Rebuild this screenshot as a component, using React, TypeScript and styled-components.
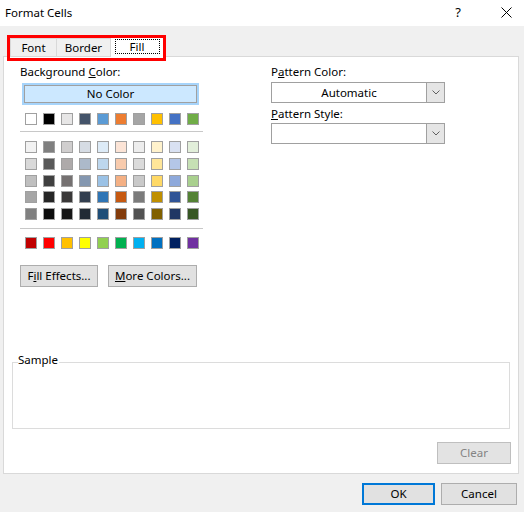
import React from 'react'
import styled, { createGlobalStyle } from 'styled-components'

const themeColors = ['#ffffff', '#000000', '#e7e6e6', '#44546a', '#5b9bd5', '#ed7d31', '#a5a5a5', '#ffc000', '#4472c4', '#70ad47']

const tintRows = [
  ['#f2f2f2', '#7f7f7f', '#d0cece', '#d6dce4', '#ddebf7', '#fce4d6', '#ededed', '#fff2cc', '#d9e1f2', '#e2efda'],
  ['#d9d9d9', '#595959', '#aeaaaa', '#acb9ca', '#bdd7ee', '#f8cbad', '#dbdbdb', '#ffe699', '#b4c6e7', '#c6e0b4'],
  ['#bfbfbf', '#404040', '#757171', '#8497b0', '#9bc2e6', '#f4b084', '#c9c9c9', '#ffd966', '#8ea9db', '#a9d08e'],
  ['#a6a6a6', '#262626', '#3a3838', '#333f4f', '#2f75b5', '#c65911', '#7b7b7b', '#bf8f00', '#305496', '#548235'],
  ['#808080', '#0d0d0d', '#161616', '#222b35', '#1f4e78', '#833c0c', '#525252', '#806000', '#203764', '#375623'],
]

const standardColors = ['#c00000', '#ff0000', '#ffc000', '#ffff00', '#92d050', '#00b050', '#00b0f0', '#0070c0', '#002060', '#7030a0']

const GlobalStyle = createGlobalStyle`
  html, body {
    margin: 0;
    padding: 0;
    background: #f0f0f0;
  }
  body {
    font-family: "Noto Sans", "Open Sans", sans-serif;
    font-size: 11.5px;
    color: #000;
  }
  * {
    box-sizing: border-box;
  }
`

const Chevron = () => (
  <svg width="8" height="5" viewBox="0 0 8 5">
    <path d="M0.5 0.5 L4 4 L7.5 0.5" fill="none" stroke="#606060" strokeWidth="1" />
  </svg>
)

const CloseGlyph = () => (
  <svg width="11" height="11" viewBox="0 0 11 11">
    <path d="M0.5 0.5 L10.5 10.5 M10.5 0.5 L0.5 10.5" stroke="#000" strokeWidth="1" />
  </svg>
)

const App = () => {
  return (
    <Dialog>
      <GlobalStyle />
      <TitleBar>
        <Title>Format Cells</Title>
        <HelpButton>?</HelpButton>
        <CloseButton><CloseGlyph /></CloseButton>
      </TitleBar>

      <TabStrip>
        <Tab $w={47}>Font</Tab>
        <Tab $w={55}>Border</Tab>
        <Tab $w={54} $active><FocusRect>Fill</FocusRect></Tab>
        <RedBox />
      </TabStrip>

      <Panel>
        <TopSection>
          <LeftCol>
            <Label>Background <u>C</u>olor:</Label>
            <NoColor>No Color</NoColor>
            <SwatchRow $top={8}>
              {themeColors.map(c => <Swatch key={c} $color={c} />)}
            </SwatchRow>
            <Divider $top={6} />
            <TintGrid>
              {tintRows.map((row, i) => (
                <SwatchRow key={i} $top={0}>
                  {row.map(c => <Swatch key={c} $color={c} />)}
                </SwatchRow>
              ))}
            </TintGrid>
            <Divider $top={8} />
            <SwatchRow $top={8}>
              {standardColors.map(c => <Swatch key={c} $color={c} />)}
            </SwatchRow>
            <ButtonRow>
              <Button $w={78}>F<u>i</u>ll Effects...</Button>
              <Button $w={89}><u>M</u>ore Colors...</Button>
            </ButtonRow>
          </LeftCol>

          <RightCol>
            <Label>P<u>a</u>ttern Color:</Label>
            <Combo $top={3}>
              <ComboText>Automatic</ComboText>
              <ComboArrow><Chevron /></ComboArrow>
            </Combo>
            <Label $top={4}><u>P</u>attern Style:</Label>
            <Combo $top={2}>
              <ComboText />
              <ComboArrow><Chevron /></ComboArrow>
            </Combo>
          </RightCol>
        </TopSection>

        <SampleBox>
          <SampleLegend>Sample</SampleLegend>
        </SampleBox>

        <ClearRow>
          <Button $w={74} disabled>Clear</Button>
        </ClearRow>
      </Panel>

      <Footer>
        <Button $w={73} $primary>OK</Button>
        <Button $w={76}>Cancel</Button>
      </Footer>
    </Dialog>
  )
}

export default App

const Dialog = styled.div`
  width: 524px;
  height: 512px;
  background: #f0f0f0;
  display: flex;
  flex-direction: column;
  overflow: hidden;
`
const TitleBar = styled.div`
  height: 26px;
  background: #fff;
  display: flex;
  align-items: center;
  padding: 0 0 2px 5px;
`
const Title = styled.div`
  flex: 1;
  font-size: 11.5px;
`
const HelpButton = styled.div`
  width: 30px;
  margin-right: 15px;
  text-align: center;
  font-size: 13px;
`
const CloseButton = styled.div`
  width: 36px;
  display: flex;
  justify-content: center;
  align-items: center;
`
const TabStrip = styled.div`
  position: relative;
  z-index: 1;
  display: flex;
  align-items: flex-end;
  align-self: flex-start;
  height: 20px;
  margin: 10px 0 0 10px;
`
const Tab = styled.div<{ $w: number; $active?: boolean }>`
  width: ${p => p.$w}px;
  height: ${p => (p.$active ? 21 : 18)}px;
  margin-bottom: ${p => (p.$active ? -1 : 0)}px;
  margin-right: -1px;
  display: flex;
  align-items: center;
  justify-content: center;
  background: ${p => (p.$active ? '#fff' : '#f0f0f0')};
  border: 1px solid #d9d9d9;
  border-bottom: none;
  padding-bottom: ${p => (p.$active ? 2 : 1)}px;
`
const FocusRect = styled.span`
  width: 45px;
  height: 15px;
  border: 1px dotted #000;
  display: flex;
  align-items: center;
  justify-content: center;
  line-height: 13px;
`
const RedBox = styled.div`
  position: absolute;
  left: -3px;
  top: -1px;
  width: 159px;
  height: 26px;
  border: 3px solid #ff0000;
  pointer-events: none;
`
const Panel = styled.div`
  margin: 0 5px 0 3px;
  height: 418px;
  background: #fff;
  border: 1px solid #d9d9d9;
  display: flex;
  flex-direction: column;
`
const TopSection = styled.div`
  display: grid;
  grid-template-columns: 184px 174px;
  column-gap: 67px;
  padding: 8px 0 0 16px;
`
const LeftCol = styled.div`
  display: flex;
  flex-direction: column;
`
const RightCol = styled.div`
  display: flex;
  flex-direction: column;
`
const Label = styled.div<{ $top?: number }>`
  height: 14px;
  line-height: 13px;
  margin-top: ${p => p.$top || 0}px;
`
const NoColor = styled.div`
  margin: 4px 0 0 2px;
  width: 177px;
  height: 22px;
  border: 2px solid #a6d4fb;
  background: #cce8ff;
  box-shadow: inset 0 0 0 1px #a0a0a0;
  display: flex;
  align-items: center;
  justify-content: center;
  padding-bottom: 1px;
`
const SwatchRow = styled.div<{ $top: number }>`
  display: flex;
  gap: 6px;
  padding-left: 5px;
  margin-top: ${p => p.$top}px;
`
const Swatch = styled.div<{ $color: string }>`
  width: 12px;
  height: 12px;
  background: ${p => p.$color};
  border: 1px solid #a0a0a0;
`
const Divider = styled.div<{ $top: number }>`
  width: 183px;
  height: 1px;
  background: #c8c8c8;
  margin-top: ${p => p.$top}px;
`
const TintGrid = styled.div`
  display: flex;
  flex-direction: column;
  gap: 4.75px;
  margin-top: 9px;
`
const ButtonRow = styled.div`
  display: flex;
  gap: 10px;
  margin-top: 16px;
`
const Button = styled.button<{ $w: number; $primary?: boolean }>`
  width: ${p => p.$w}px;
  height: 22px;
  padding: 0 0 2px;
  font: inherit;
  color: #000;
  background: #e1e1e1;
  border: ${p => (p.$primary ? '2px solid #0078d7' : '1px solid #adadad')};

  &:disabled {
    color: #838383;
    border-color: #bfbfbf;
    background: #e3e3e3;
  }
`
const Combo = styled.div<{ $top: number }>`
  display: flex;
  width: 174px;
  height: 21px;
  margin-top: ${p => p.$top}px;
  border: 1px solid #a0a0a0;
  background: #fff;
`
const ComboText = styled.div`
  flex: 1;
  display: flex;
  align-items: center;
  justify-content: center;
  padding-bottom: 1px;
`
const ComboArrow = styled.div`
  width: 18px;
  background: #e5e5e5;
  border-left: 1px solid #a0a0a0;
  display: flex;
  align-items: center;
  justify-content: center;
`
const SampleBox = styled.div`
  position: relative;
  margin: 75px 8px 0 8px;
  height: 67px;
  border: 1px solid #dcdcdc;
`
const SampleLegend = styled.span`
  position: absolute;
  left: 5px;
  top: -10px;
  line-height: 14px;
  padding: 0 1px 0 0;
  background: #fff;
`
const ClearRow = styled.div`
  margin-top: auto;
  display: flex;
  justify-content: flex-end;
  padding: 0 7px 9px 0;
`
const Footer = styled.div`
  display: flex;
  justify-content: flex-end;
  gap: 6px;
  margin-top: 9px;
  padding-right: 7px;
`
